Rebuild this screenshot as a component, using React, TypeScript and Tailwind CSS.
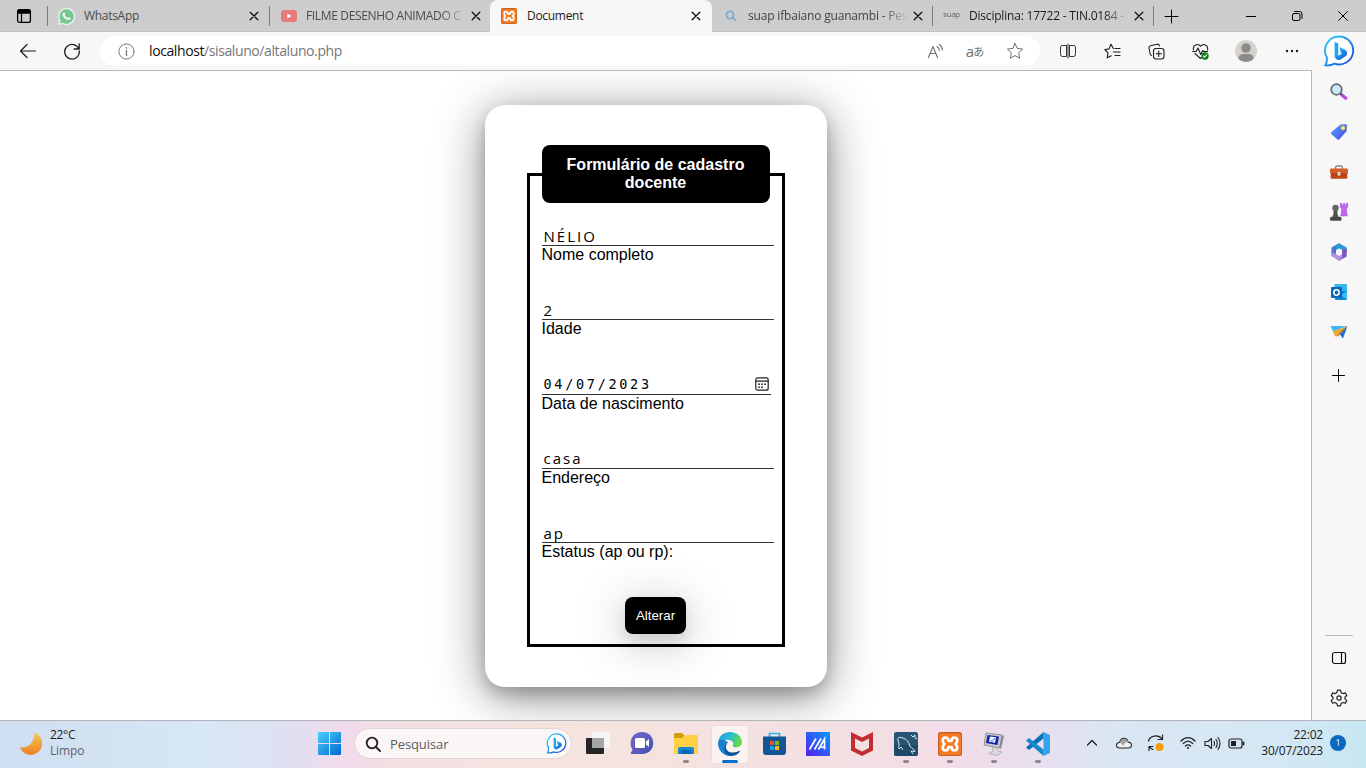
import React from "react";

type P = { children?: React.ReactNode; className?: string };

const Line = ({ size = 16, children, className = "", w = 1 }: P & { size?: number; w?: number }) => (
  <svg width={size} height={size} viewBox={`0 0 ${size} ${size}`} fill="none" stroke="currentColor" strokeWidth={w} strokeLinecap="round" strokeLinejoin="round" className={`shrink-0 ${className}`}>
    {children}
  </svg>
);

const Cell = ({ children, className = "" }: P) => (
  <div className={`flex shrink-0 items-center justify-center ${className}`}>{children}</div>
);

const XamppIcon = ({ size }: { size: number }) => (
  <svg width={size} height={size} viewBox="0 0 24 24" className="shrink-0">
    <rect width="24" height="24" rx="2.5" fill="#c9601f" />
    <rect x="1" y="1.600" width="22" height="21.400" rx="2" fill="#f47a26" />
    <path d="M7.500 5.500Q4.800 5.500 4.800 8.500 4.800 10.800 6.500 12 4.800 13.200 4.800 15.500 4.800 18.500 7.500 18.500 10.300 18.500 10.300 15.200H13.700Q13.700 18.500 16.500 18.500 19.200 18.500 19.200 15.500 19.200 13.200 17.500 12 19.200 10.800 19.200 8.500 19.200 5.500 16.500 5.500 13.700 5.500 13.700 8.800H10.300Q10.300 5.500 7.500 5.500Z" fill="none" stroke="#fff" strokeWidth="2.700" strokeLinejoin="round" />
  </svg>
);

const BingIcon = ({ size, id }: { size: number; id: string }) => (
  <svg width={size} height={size} viewBox="0 0 30 32" className="shrink-0">
    <defs>
      <linearGradient id={id} x1="0" y1="0" x2="1" y2="1">
        <stop offset="0" stopColor="#37d6f5" />
        <stop offset=".55" stopColor="#1b86ee" />
        <stop offset="1" stopColor="#2345cf" />
      </linearGradient>
    </defs>
    <path d="M15 1.500a14 14 0 1 1-4.500 27.200c-2.500 1.300-6 2-9 1.600 1.400-2.700 1.600-5 1.300-8A14 14 0 0 1 15 1.500Z" fill="#fff" stroke={`url(#${id})`} strokeWidth="1.900" />
    <path d="M10.600 7l3.700 1.400v11.800l-1.600 3.300-2.100-1.700Z" fill="#1fa6f2" />
    <path d="M15.500 12l6 2.900c2 1.200 2.200 4 .7 5.800l-5.500 3.700c-2.700 1.500-5.400.1-6.100-2.600l3.700-1 3.700-2.300-1.200-.8Z" fill={`url(#${id})`} />
  </svg>
);

const WhatsAppIcon = () => (
  <svg width="17" height="17" viewBox="0 0 16 16" className="shrink-0">
    <path d="M8 0a8 8 0 1 1-3.700 15L0 16l1.100-4A8 8 0 0 1 8 0Z" fill="#edf3ef" />
    <path d="M8 1.200A6.800 6.800 0 1 1 4.500 13.800l-2.800.7.8-2.700A6.800 6.800 0 0 1 8 1.200Z" fill="#77c890" />
    <path d="M5.300 4.300c.6-.4 1 0 1.500 1.300.2.500-.5.9-.4 1.300.7 1.200 1.500 1.900 2.700 2.400.5 0 .8-1 1.300-.8 1.300.6 1.700.8 1.400 1.600-.6 1.300-2.100 1.600-3.900.8-1.900-.9-3.400-2.700-3.700-4.300 0-1 .4-1.800 1.100-2.300Z" fill="#f1f8f3" />
  </svg>
);

const YouTubeIcon = () => (
  <svg width="16" height="12" viewBox="0 0 16 12" className="shrink-0">
    <rect width="16" height="12" rx="3" fill="#e77a7a" />
    <path d="M6.300 3.500v5L10.500 6Z" fill="#fff" />
  </svg>
);

const CloseX = () => (
  <Line size={10} w={1.300} className="text-[#111]"><path d="M1.200 1.200l7.600 7.600M8.800 1.200L1.200 8.800" /></Line>
);

const Tab = ({ icon, title, titleClass = "", active = false, className = "" }: { icon: React.ReactNode; title: string; titleClass?: string; active?: boolean; className?: string }) => (
  <div className={`flex h-8 shrink-0 items-center ${active ? "rounded-t-lg bg-[#f7f7f7]" : ""} ${className}`}>
    <Cell className="ml-2.5 w-[17px]">{icon}</Cell>
    <div className={`ml-[9px] w-[159px] whitespace-nowrap text-[12px] leading-4 ${titleClass}`}>{title}</div>
    <Cell className="ml-[3px] w-[15px]"><CloseX /></Cell>
  </div>
);

const Sep = () => <div className="h-5 w-px shrink-0 bg-[#7b7b7b]" />;

const fade = "[mask-image:linear-gradient(to_right,black_135px,transparent_160px)]";

const TabBar = () => (
  <div className="flex h-8 items-center bg-[#cdcdcd] shadow-[inset_0_-1px_0_#c0c0c0]">
    <Cell className="w-[47px]">
      <Line w={1.300} className="text-black"><rect x="1.600" y="1.600" width="12.800" height="12.800" rx="2" /><path d="M2 2.500h12v2.500H2Z" fill="currentColor" /><path d="M5.500 5v9" /></Line>
    </Cell>
    <Sep />
    <Tab className="w-[221px]" icon={<WhatsAppIcon />} title="WhatsApp" titleClass="tracking-[-0.3px] text-[#4b4b4b]" />
    <Sep />
    <Tab className="w-[220px]" icon={<YouTubeIcon />} title="FILME DESENHO ANIMADO C" titleClass={`tracking-[-0.35px] text-[#4b4b4b] ${fade}`} />
    <Tab active className="w-[222px]" icon={<XamppIcon size={16} />} title="Document" titleClass="pl-px tracking-[-0.3px] text-[#1b1b1b]" />
    <Tab className="w-[220px]" icon={<Line size={12} w={1.700} className="text-[#7baad0]"><circle cx="5" cy="5" r="3.600" /><path d="M7.700 7.700l3 3" /></Line>} title="suap ifbaiano guanambi - Pes" titleClass={`tracking-[-0.18px] text-[#444] ${fade}`} />
    <Sep />
    <Tab className="w-[220px]" icon={<span className="-mt-1 text-[8px] leading-3 tracking-[-0.3px] text-[#666]">suap</span>} title="Disciplina: 17722 - TIN.0184 -" titleClass={`tracking-[-0.2px] text-[#1b1b1b] ${fade}`} />
    <Sep />
    <Cell className="w-[36px]"><Line><path d="M1 8.500h13M7.500 2v13" /></Line></Cell>
    <div className="flex-1" />
    <Cell className="w-[46px]"><Line size={10}><path d="M0 5.500h10" /></Line></Cell>
    <Cell className="w-[46px]"><Line size={12}><rect x="1.500" y="3.500" width="7.500" height="7" rx="1.500" /><path d="M3.500 1.500h5a2.500 2.500 0 0 1 2.500 2.500v4.500" /></Line></Cell>
    <Cell className="w-[46px]"><Line size={12}><path d="M1.500 1.500l9 9M10.500 1.500l-9 9" /></Line></Cell>
  </div>
);

const Toolbar = () => (
  <div className="flex h-[38px] items-center bg-[#f7f7f7] text-[#1d1d1d]">
    <Cell className="ml-[6px] w-11"><Line size={18} w={1.200}><path d="M16.500 9H1.500M8 2.500L1.500 9 8 15.500" /></Line></Cell>
    <Cell className="w-11"><Line size={18} w={1.300}><path d="M15.800 7A7.300 7.300 0 1 0 16.300 9M16.200 2v5h-5" /></Line></Cell>
    <div className="ml-1.5 flex h-[30px] w-[940px] items-center rounded-full bg-white">
      <Cell className="ml-[18px] w-4 text-[#777]"><Line size={17}><circle cx="8.500" cy="8.500" r="7.600" /><path d="M8.500 7.500v5M8.500 4.700v.5" strokeWidth="1.300" /></Line></Cell>
      <div className="ml-[15px] flex-1 text-[14px] leading-5 tracking-[-0.4px] text-[#767676]"><span className="text-[#111]">localhost</span>/sisaluno/altaluno.php</div>
      <Cell className="w-10 text-[#707070]"><Line size={17} w={1.100}><path d="M1.500 14.500L6 3.500l4.500 11M3 10.500h6M10 3.500c1.500.8 2.200 2 2.400 4M12.300 1.500c2.200 1.300 3 3.200 3.200 5.500" /></Line></Cell>
      <Cell className="w-10 text-[#707070]"><span className="text-[15px] leading-4">a</span><span className="-ml-px font-['Noto_Sans_CJK_JP',sans-serif] text-[11px] leading-4">あ</span></Cell>
      <Cell className="mr-[5px] w-10 text-[#707070]"><Line size={18}><path d="M9 1.500l2.300 4.900 5.300.7-3.900 3.700 1 5.400L9 13.600l-4.700 2.600 1-5.400L1.400 7.100l5.300-.7Z" /></Line></Cell>
    </div>
    <div className="ml-1.5 flex flex-1 items-center">
      <Cell className="w-11"><Line><path d="M6 2.500H2.500A2 2 0 0 0 .5 4.500v7a2 2 0 0 0 2 2H6.500v-11H6M10 2.500h3.500a2 2 0 0 1 2 2v7a2 2 0 0 1-2 2H9.500v-11ZM8 1v14" strokeWidth=".9" /></Line></Cell>
      <Cell className="w-11"><Line size={17} w={1.100}><path d="M9.500 5.500h-.2L7 1.300 5 5.900.8 6.500 4 9.800l-.8 5 4-2.100M11 5.500h5M9.500 9h6.500M11 12.500h5" /></Line></Cell>
      <Cell className="w-11"><Line size={17} w={1.100}><rect x="5.500" y="5.500" width="10.500" height="10.500" rx="2.500" /><path d="M10.700 8v5.500M8 10.700h5.500M3.500 12.500c-1-.5-1.300-1-1.500-2L1 5c-.2-1.300.3-2 1.500-2.300L9 1.200c1.500-.2 2.200.3 2.500 1.800" /></Line></Cell>
      <Cell className="w-11">
        <Line size={17} w={1.100}>
          <path d="M1.500 7C.3 1.800 6-.2 8.500 3.300 11-.2 16.700 1.800 15.500 7M3 10.500l5.500 5 1-1M.7 8.500h3.500L6 5l2.700 6.500 2-4 1 1h4" />
          <circle cx="13" cy="13" r="3.700" fill="#107c10" stroke="none" /><path d="M11.300 13l1.200 1.200 2.200-2.300" stroke="#fff" />
        </Line>
      </Cell>
      <Cell className="w-[47px]">
        <svg width="22" height="22" viewBox="0 0 22 22"><circle cx="11" cy="11" r="11" fill="#d4d1ce" /><circle cx="11" cy="8" r="4.800" fill="#8f8b87" /><path d="M3.500 19c0-5 3-5 7.500-5s7.500 0 7.500 5A11 11 0 0 1 3.500 19Z" fill="#8f8b87" /></svg>
      </Cell>
      <Cell className="w-[45px]"><Line><g fill="currentColor" stroke="none"><circle cx="3" cy="8" r="1.200" /><circle cx="8" cy="8" r="1.200" /><circle cx="13" cy="8" r="1.200" /></g></Line></Cell>
      <Cell className="w-[49px]"><BingIcon size={32} id="bingA" /></Cell>
    </div>
  </div>
);

const Field = ({ value, label, date = false }: { value: string; label: string; date?: boolean }) => (
  <div className="h-[74.300px]">
    <div className={`flex h-5 items-center justify-between border-b border-[#333] px-[2px] ${date ? "w-[229px] font-['DejaVu_Sans_Mono',monospace] text-[13.500px] tracking-[2.700px]" : "w-[232px] font-['Open_Sans',sans-serif] text-[15px] tracking-[2px]"}`}>
      <span className="leading-5">{value}</span>
      {date && (
        <Line size={14} w={1.200} className="text-[#222]"><rect x=".8" y=".8" width="12.400" height="12.400" rx="2" /><path d="M1 4.200h12" /><path d="M4 7.200h.1M7 7.200h.1M10 7.200h.1M4 10.200h.1M7 10.200h.1" strokeWidth="1.700" /></Line>
      )}
    </div>
    <label className="block text-[16px] leading-[18px]">{label}</label>
  </div>
);

const Page = () => (
  <main className="flex flex-1 justify-center overflow-hidden border-r border-t border-[#b8b8b8] bg-white pt-[34px] font-['Liberation_Sans',Arial,sans-serif] text-black">
    <form className="h-[582px] w-[342px] rounded-[20px] bg-white px-[42px] pt-10 shadow-[0_8px_16px_0_rgba(0,0,0,0.2),0_8px_50px_0_rgba(0,0,0,0.45)]">
      <fieldset className="h-[502px] w-[258px] min-w-0 border-[3px] border-black px-3">
        <legend className="h-[58px] w-[228px] rounded-lg bg-black px-5 py-[11px] text-center text-[16px] font-bold leading-[18px] text-white">Formulário de cadastro docente</legend>
        <div className="pt-[23px]">
          <Field value="NÉLIO" label="Nome completo" />
          <Field value="2" label="Idade" />
          <Field date value="04/07/2023" label="Data de nascimento" />
          <Field value="casa" label="Endereço" />
          <Field value="ap" label="Estatus (ap ou rp):" />
        </div>
        <div className="flex w-[228px] justify-center">
          <button type="button" className="h-[37px] w-[61px] rounded-lg bg-black text-[13.300px] text-white shadow-[0_8px_16px_0_rgba(0,0,0,0.1),0_8px_50px_0_rgba(0,0,0,0.25)]">Alterar</button>
        </div>
      </fieldset>
    </form>
  </main>
);

const Sidebar = () => (
  <aside className="flex w-[54px] flex-col items-center bg-[#f7f7f7] pt-0.5">
    <Cell className="h-10">
      <svg width="18" height="18" viewBox="0 0 18 18"><path d="M12 12l3.800 3.300" stroke="#bd46e8" strokeWidth="3.200" strokeLinecap="round" /><path d="M10 10l2 2" stroke="#555" strokeWidth="2" /><circle cx="6.500" cy="6.500" r="5.300" fill="#c7ebfb" stroke="#686868" strokeWidth="1.700" /></svg>
    </Cell>
    <Cell className="h-10">
      <svg width="18" height="18" viewBox="0 0 18 18"><defs><linearGradient id="tag" x1="0" y1="0" x2="1" y2="1"><stop stopColor="#54a6ff" /><stop offset="1" stopColor="#4844e4" /></linearGradient></defs><path d="M10.500 1.500l5-.2c1 0 1.500.5 1.500 1.500l-.3 5.200-7.200 8.200c-.7.7-1.500.7-2.200 0L1.500 11.300c-.8-.8-.8-1.600 0-2.300Z" fill="url(#tag)" /><circle cx="13" cy="5" r="2" fill="#fff1a0" stroke="#e0b42c" /></svg>
    </Cell>
    <Cell className="h-10">
      <svg width="18" height="18" viewBox="0 0 18 18"><path d="M5.500 6V4.500c0-1 .5-1.500 1.500-1.500h4c1 0 1.500.5 1.500 1.500V6" fill="none" stroke="#888" strokeWidth="1.300" /><rect y="5.500" width="18" height="5" rx="1.200" fill="#d55d24" /><path d="M.7 10h16.600V14.500c0 .8-.5 1.300-1.300 1.300H2c-.8 0-1.300-.5-1.300-1.300Z" fill="#bd4415" /><rect x="7.500" y="8.800" width="3" height="4" rx="1" fill="#d5d5d5" /></svg>
    </Cell>
    <Cell className="h-10">
      <svg width="18" height="18" viewBox="0 0 18 18"><path d="M10 0h2v1.500h1.200V0h1.800v1.500h1V0h2v4.500l-1.300 1 .5 5.500 1 2.300H10l.8-2.300.5-5.500-1.300-1Z" fill="#bd66ee" /><circle cx="5.500" cy="5" r="3.200" fill="#656565" /><path d="M3 8h5l-.8 1.500L8.500 14h-6l1.300-4.500Z" fill="#505050" /><rect x="0" y="13.700" width="11.500" height="4" rx="1.500" fill="#484848" /></svg>
    </Cell>
    <Cell className="h-10">
      <svg width="18" height="18" viewBox="0 0 18 18"><path d="M9 .3L1.500 4.500v8.500l4.500 1V7l6-3.500Z" fill="#4b78d0" /><path d="M9 .3l7.700 4.200v5L11.500 6.500 9 5.500 6 7V3Z" fill="#2c9ad8" /><path d="M16.700 5.500v8L9 17.700 5.500 15.500 12 11.500V7Z" fill="#7a5abb" /><path d="M1.500 13V9.500L6 11l3 2 2.500-1.500L13 13 9 17.700Z" fill="#b092e2" /><path d="M9 5.500l3 1.700v3.600l-3 1.700-3-1.700V7.200Z" fill="#f7f7f7" /></svg>
    </Cell>
    <Cell className="h-10">
      <svg width="18" height="18" viewBox="0 0 18 18"><rect x="4.500" y="1" width="12.500" height="11" rx="1" fill="#37b4ee" /><path d="M5 8h12v8c0 .6-.4 1-1 1H6c-.6 0-1-.4-1-1Z" fill="#1385d5" /><path d="M11 12l6-4v9Z" fill="#35c0f2" /><rect x="1" y="4" width="11" height="11" rx="1" fill="#0868bd" /><circle cx="6.500" cy="9.500" r="2.700" fill="none" stroke="#fff" strokeWidth="1.500" /></svg>
    </Cell>
    <Cell className="h-10">
      <svg width="18" height="18" viewBox="0 0 18 18"><path d="M.5 3L17.500 3 3 8.500Z" fill="#43b7f3" /><path d="M17.500 3L13 15.500 8.500 10Z" fill="#2475d3" /><path d="M17.500 3L3 8.500 5 13.500Z" fill="#f4a629" /><path d="M17.500 3L5.300 13.500l3-.5Z" fill="#d17c12" /></svg>
    </Cell>
    <Cell className="mt-[3px] h-10"><Line size={14}><path d="M.5 7.500h12M6.500 1.500v12" /></Line></Cell>
    <div className="flex-1" />
    <div className="h-px w-7 bg-[#b9b9b9]" />
    <Cell className="mt-[2px] h-10 text-[#111]"><Line w={1.200}><rect x="1.500" y="2.500" width="13" height="11" rx="2" /><path d="M10.500 2.500v11" /></Line></Cell>
    <Cell className="mb-[2px] h-10 text-[#222]">
      <Line size={18} w={1.200}><circle cx="9" cy="9" r="2.200" /><path d="M7.500 1.200h3l.7 2.500 1.600.9 2.500-.7 1.500 2.600-1.800 1.700v1.700l1.800 1.700-1.500 2.600-2.500-.7-1.600.9-.7 2.500h-3l-.7-2.500-1.600-.9-2.500.7-1.500-2.600L3 9.900V8.200L1.200 6.500l1.500-2.600 2.500.7 1.600-.9Z" /></Line>
    </Cell>
  </aside>
);

const TaskItem = ({ children, dot = false }: P & { dot?: boolean }) => (
  <div className="flex h-12 w-11 shrink-0 flex-col items-center pt-[9px]">
    <div className="flex h-7 items-center justify-center">{children}</div>
    {dot && <div className="mt-0.5 h-[3px] w-1.5 rounded-full bg-[#8e8587]" />}
  </div>
);

const Taskbar = () => (
  <footer className="flex h-12 items-center border-t border-[#b3b4ba] bg-[linear-gradient(90deg,#cfdef1_0%,#d7e7f5_15%,#dee1f2_21%,#f0daec_25%,#f4dfe2_29%,#f5e4df_41%,#f4e0e1_58%,#f3dde7_69%,#e9deee_75%,#d9e6f3_82%,#d6e7f4_92%,#c8e8f3_100%)] text-[#202020]">
    <div className="-mt-[3px] ml-5 flex w-[287px] items-center gap-2">
      <svg width="22" height="23" viewBox="0 0 22 23" className="shrink-0"><defs><linearGradient id="moon" x1="0" y1="0" x2="0" y2="1"><stop stopColor="#f7c75c" /><stop offset="1" stopColor="#ed8020" /></linearGradient></defs><path d="M14.500.5A11.500 11.500 0 1 1 0 15.500C9 16.500 15 9 14.500.5Z" fill="url(#moon)" /></svg>
      <div className="text-[12px] leading-4 tracking-[-0.3px]"><div>22°C</div><div className="tracking-[-0.150px] text-[#5d6268]">Limpo</div></div>
    </div>
    <TaskItem>
      <svg width="23" height="23" viewBox="0 0 23 23"><defs><linearGradient id="win" x1="0" y1="0" x2="1" y2="1"><stop stopColor="#4bd0fb" /><stop offset="1" stopColor="#0068cf" /></linearGradient></defs><path d="M1 0h10v11H0V1Q0 0 1 0ZM12 0h10q1 0 1 1v10H12ZM0 12h11v11H1q-1 0-1-1ZM12 12h11v10q0 1-1 1H12Z" fill="url(#win)" /></svg>
    </TaskItem>
    <div className="-mt-0.5 ml-[3px] mr-1 flex h-[31px] w-[218px] items-center rounded-full border border-[#e3d2d4] bg-[#fbf6f6] pl-2.5 pr-1">
      <Line w={1.800}><circle cx="7" cy="7" r="5.300" /><path d="M11 11l4 4" /></Line>
      <span className="ml-[9px] flex-1 text-[13px] leading-5 tracking-[-0.1px] text-[#5e5b5c]">Pesquisar</span>
      <BingIcon size={21} id="bingB" />
    </div>
    <TaskItem><svg width="24" height="23" viewBox="0 0 24 23"><rect y="6" width="18" height="16" rx="1" fill="#252525" /><rect x="6" width="18" height="16" rx="1" fill="#f5f5f5" /><path d="M6 6h12v10H6Z" fill="#a5a5a5" /></svg></TaskItem>
    <TaskItem><svg width="24" height="23" viewBox="0 0 24 23"><defs><linearGradient id="chat" x1="0" y1="0" x2="1" y2="1"><stop stopColor="#7868cc" /><stop offset="1" stopColor="#4250b3" /></linearGradient></defs><path d="M12 0c15 0 15 22 0 22H1.500c-.8 0-1-.7-.6-1.400l1.600-2.700C-2 10 2 0 12 0Z" fill="url(#chat)" /><rect x="5" y="6" width="10" height="10" rx="1.500" fill="#fff" /><path d="M16 9.500l3-2.500v8l-3-2.500Z" fill="#fff" /></svg></TaskItem>
    <TaskItem dot><svg width="24" height="23" viewBox="0 0 24 23"><path d="M0 2Q0 1 1 1h7l3 3-3 3H0Z" fill="#d59b08" /><path d="M0 6h8l3-3h12q1 0 1 1v17q0 1-1 1H1q-1 0-1-1Z" fill="#ffd045" /><path d="M4 22v-5q0-2 2-2h12q2 0 2 2v5Z" fill="#1689d5" /><path d="M7 18h10v4H7Z" fill="#0866b4" /></svg></TaskItem>
    <div className="mx-[3px] flex h-[39px] w-[38px] shrink-0 flex-col items-center rounded-[4px] border border-[#eadede] bg-[#fbf2f2] pt-1.5">
      <svg width="24" height="24" viewBox="0 0 24 24" className="shrink-0"><defs><linearGradient id="edge" x1="0" y1="0" x2="1" y2=".3"><stop stopColor="#2899df" /><stop offset=".55" stopColor="#28bdd2" /><stop offset="1" stopColor="#62db4b" /></linearGradient></defs><path d="M.2 10C1.500-3 22-3.500 24 9.500c.3 3.500-2.200 6-6.200 6-3.200 0-4.200-1.200-3-2.700C17 8 7 6 .2 10Z" fill="url(#edge)" /><path d="M.2 10C-1 17 5 24 12 24 6 20 6 13 10 10.500 6 6 1 7 .2 10Z" fill="#1681cf" /><path d="M10 10.500C6 14 8 21 15 20.500c3.500 0 5.500-1.800 7.200-1.800C20 23 16 24 12 24 5 22 5 13.500 10 10.500Z" fill="#0c539c" /><path d="M10 10.500c5-1 6 1 4.800 2.500-1 1.500.5 2.500 3 2.500l-3 2.500C11 17 9 14 10 10.500Z" fill="#fbf2f2" /></svg>
      <div className="mt-1 h-[3px] w-4 shrink-0 rounded-full bg-[#0870ce]" />
    </div>
    <TaskItem><svg width="23" height="23" viewBox="0 0 23 23"><path d="M6.500 6V1.500h10V6" fill="none" stroke="#2bb5ef" strokeWidth="1.700" /><path d="M0 4.500h23V20q0 3-3 3H3q-3 0-3-3Z" fill="#145596" /><path d="M7 9h4v4H7Z" fill="#ef5325" /><path d="M12 9h4v4h-4Z" fill="#81bc06" /><path d="M7 14h4v4H7Z" fill="#08a6ef" /><path d="M12 14h4v4h-4Z" fill="#ffba08" /></svg></TaskItem>
    <TaskItem><svg width="24" height="24" viewBox="0 0 24 24"><defs><linearGradient id="arm" x1="0" y1="1" x2="1" y2="0"><stop stopColor="#5520ef" /><stop offset="1" stopColor="#0798ff" /></linearGradient></defs><path d="M0 0h24v24H0Z" fill="url(#arm)" /><path d="M3.500 17.500L10 6.500M8.500 17.500L15 6.500M12.500 17.500L18.500 7v10.500M15 15.500l3.500-1" stroke="#fff" strokeWidth="1.700" fill="none" /></svg></TaskItem>
    <TaskItem><svg width="22" height="24" viewBox="0 0 22 24"><path d="M0 0l11 5.500L22 0v18.500L11 24 0 18.500Zm4 6.500v9.500l7 3.500 7-3.500V6.500L11 10Z" fill="#c42e33" fillRule="evenodd" /></svg></TaskItem>
    <TaskItem dot><svg width="24" height="24" viewBox="0 0 24 24"><rect width="24" height="24" rx="2" fill="#285775" /><path d="M0 13h24v9q0 2-2 2H2q-2 0-2-2Z" fill="#17405f" opacity=".6" /><path d="M5 17c-1-3 1-4-.5-7C3 7 4 4.500 7 5.500c6 1 8 5 9 9 2 1 4 3 5 5l-4-.5 2 3M5 17l2-2 2 3M17 3l2 2 2-2v3l2 1" stroke="#dbe7ee" fill="none" /></svg></TaskItem>
    <TaskItem dot><XamppIcon size={24} /></TaskItem>
    <TaskItem dot><svg width="23" height="24" viewBox="0 0 23 24"><path d="M3 1l16 2-2 13L1 13Z" fill="#c6c9cf" stroke="#777" strokeWidth=".7" /><path d="M4.500 3L16 4.500 14.500 13 3 11Z" fill="#1428a6" /><path d="M7 4.500l6 .7-1 5.500-6-1Z" fill="#f4f7ff" /><path d="M7.500 8l1.500 1.500L12 6" fill="none" stroke="#2878c5" /><path d="M19 3l2 1-3 13-2-1Z" fill="#858a94" /><path d="M9 15l5 1 1 3 4 1-5 3.500-8-2 4-2.500Z" fill="#d8dade" stroke="#999" strokeWidth=".6" /></svg></TaskItem>
    <TaskItem dot><svg width="24" height="24" viewBox="0 0 24 24"><path d="M17.500 0L24 3v18l-6.500 3Z" fill="#36a3eb" /><path d="M17.500 0v6.500L3 18 0 15.500Z" fill="#0872b9" /><path d="M3 6l14.500 11.500V24L0 8.500Z" fill="#1689d2" /></svg></TaskItem>
    <div className="flex-1" />
    <div className="-mt-[3px] flex items-center">
      <Cell className="w-8"><Line size={12} w={1.300}><path d="M1.500 8L6 3.500 10.500 8" /></Line></Cell>
      <Cell className="w-8"><Line w={1.100}><path d="M4 13C-1 13-.5 7.500 3.500 7.500 5 2 11 2 12 7c4.500.2 4.500 6 .5 6Z" fill="#efefef" /><path d="M3.500 7.500c1.500-5 7.500-5 8.500-.5-3 0-3.500 1.500-5 4-1-2-2-3.200-3.500-3.500Z" fill="#a2a2a2" stroke="none" /></Line></Cell>
      <Cell className="w-8"><Line size={18} w={1.200}><path d="M1.500 7C3 1.500 11 0 15 5M15.500 1v4.500H11M6 15.500c-1.500-.5-2.500-1.200-3.500-3M2 16.500v-4h4" /><circle cx="12.500" cy="13" r="4" fill="#f89a0b" stroke="none" /></Line></Cell>
      <Cell className="w-8"><Line w={1.300}><path d="M1 6c4-4.500 10-4.500 14 0M3.300 8.500c3-3 6.400-3 9.400 0M5.500 11c1.600-1.500 3.400-1.500 5 0" /><circle cx="8" cy="13" r="1" fill="currentColor" stroke="none" /></Line></Cell>
      <Cell className="w-4"><Line size={17} w={1.100}><path d="M1 6.500h3l3.500-3v10l-3.500-3H1ZM10 6.500q1 2 0 4M12 4.500q2.500 4 0 8M14 2.500q4 6 0 12" /></Line></Cell>
      <Cell className="w-8"><Line size={17} w={1.200}><rect x="1" y="4" width="13" height="9" rx="2" /><rect x="3" y="6" width="5" height="5" fill="currentColor" stroke="none" /><path d="M15.500 7.500v2" strokeWidth="1.800" /></Line></Cell>
      <div className="w-[71px] whitespace-nowrap text-right text-[12px] leading-4 tracking-[-0.2px]"><div>22:02</div><div className="-ml-4">30/07/2023</div></div>
      <Cell className="ml-[7px] mr-5 h-4 w-4 rounded-full bg-[#0868c2] text-[9px] text-white">1</Cell>
    </div>
  </footer>
);

export default function App() {
  return (
    <div className="flex h-[768px] w-[1366px] flex-col overflow-hidden bg-white font-['Open_Sans','Noto_Sans',sans-serif]">
      <TabBar />
      <Toolbar />
      <div className="flex h-[650px] min-h-0">
        <Page />
        <Sidebar />
      </div>
      <Taskbar />
    </div>
  );
}
